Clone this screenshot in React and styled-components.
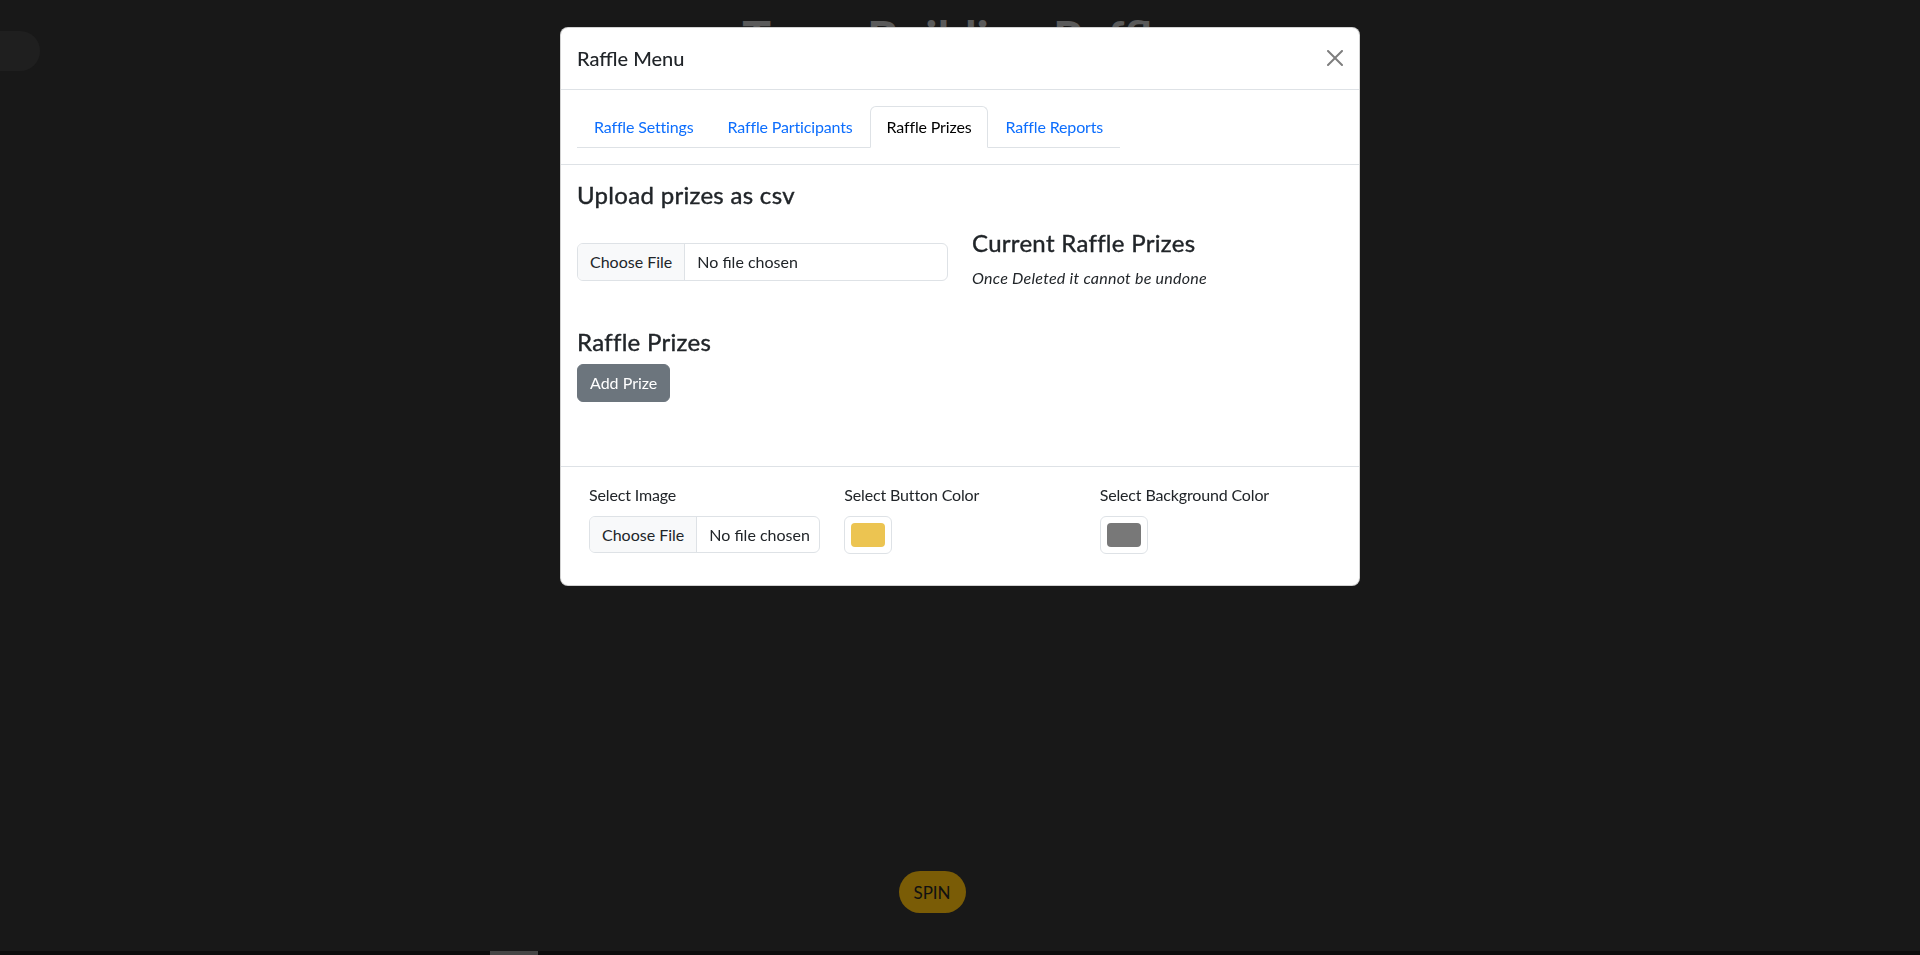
import React from "react";
import styled, { createGlobalStyle } from "styled-components";

const GlobalStyle = createGlobalStyle`
  html, body { margin: 0; padding: 0; }
  body {
    font-family: Lato, "Liberation Sans", sans-serif;
    background: #303030;
    overflow: hidden;
  }
  *, *::before, *::after { box-sizing: border-box; }
`;

/* ---------- page behind the modal ---------- */
const Page = styled.div`
  height: 100vh;
  display: flex;
  flex-direction: column;
  background: #303030;
  overflow: hidden;
`;

const TopRow = styled.div`
  display: grid;
  grid-template-columns: 40px 1fr;
  align-items: start;
`;

const SidePill = styled.div`
  width: 80px;
  height: 40px;
  margin: 31px 0 0 -40px;
  border-radius: 20px;
  background: #3e3e3e;
`;

const Hero = styled.h1`
  margin: 8px 0 0;
  padding-right: 40px;
  text-align: center;
  font-size: 48px;
  line-height: 60px;
  font-weight: 700;
  color: #b4b4b4;
`;

const SpinRow = styled.div`
  margin-top: auto;
  margin-bottom: 38px;
  display: flex;
  justify-content: center;
  padding-right: 56px;
`;

const SpinButton = styled.button`
  width: 67px;
  height: 42px;
  border: none;
  border-radius: 21px;
  background: #f4b80c;
  color: #222;
  font-family: inherit;
  font-size: 17px;
`;

const BottomBar = styled.div`
  height: 4px;
  background: #181818;
  display: flex;
`;

const Thumb = styled.div`
  width: 48px;
  margin-left: 490px;
  background: #8a8a8a;
`;

/* ---------- modal ---------- */
const Backdrop = styled.div`
  position: fixed;
  inset: 0;
  background: rgba(0, 0, 0, 0.5);
`;

const DialogLayer = styled.div`
  position: fixed;
  inset: 0;
  overflow-y: auto;
`;

const Dialog = styled.div`
  width: 800px;
  margin: 27px auto;
  background: #fff;
  border: 1px solid rgba(0, 0, 0, 0.175);
  border-radius: 8px;
  color: #212529;
`;

const Header = styled.div`
  display: flex;
  align-items: center;
  justify-content: space-between;
  padding: 15px 16px 16px;
  border-bottom: 1px solid #dee2e6;
`;

const Title = styled.h5`
  margin: 0;
  font-size: 20px;
  line-height: 30px;
  font-weight: 500;
  color: #212529;
`;

const CloseButton = styled.button`
  display: flex;
  width: 16px;
  height: 16px;
  padding: 0;
  border: 0;
  background: transparent;
  opacity: 0.5;
  cursor: pointer;
`;

const TabsBar = styled.div`
  padding: 16px;
`;

const Tabs = styled.div`
  display: inline-flex;
  border-bottom: 1px solid #dee2e6;
`;

const Tab = styled.button`
  font-family: inherit;
  font-size: 16px;
  line-height: 24px;
  letter-spacing: -0.15px;
  padding: 8px 16px;
  margin-bottom: -1px;
  background: ${(p) => (p.$active ? "#fff" : "transparent")};
  border: 1px solid transparent;
  border-color: ${(p) => (p.$active ? "#dee2e6 #dee2e6 #fff" : "transparent")};
  border-radius: 6px 6px 0 0;
  color: ${(p) => (p.$active ? "#000" : "#0d6efd")};
  cursor: pointer;
`;

const Body = styled.div`
  padding: 16px;
  border-top: 1px solid #dee2e6;
`;

const Heading = styled.h4`
  margin: 0 0 8px;
  font-size: 24px;
  line-height: 28.8px;
  font-weight: 400;
  letter-spacing: 0.3px;
  -webkit-text-stroke: 0.4px currentColor;
  color: #212529;
`;

const TwoCol = styled.div`
  display: grid;
  grid-template-columns: minmax(0, 1fr) minmax(0, 1fr);
  column-gap: 24px;
  align-items: start;
  margin-top: 19px;
`;

const LeftCol = styled.div`
  padding-top: 14px;
`;

const Note = styled.p`
  margin: 0 0 16px;
  font-size: 16px;
  line-height: 24px;
  letter-spacing: 0.25px;
  font-style: italic;
`;

const PrizesSection = styled.section`
  margin-top: 22px;
`;

const AddButton = styled.button`
  font-family: inherit;
  font-size: 16px;
  line-height: 24px;
  padding: 6px 12px;
  border: 1px solid #6c757d;
  border-radius: 6px;
  background: #6c757d;
  color: #fff;
  cursor: pointer;
`;

const PrizeList = styled.div`
  min-height: 48px;
`;

const FileField = styled.label`
  display: flex;
  width: 100%;
  height: ${(p) => p.$h}px;
  border: 1px solid #dee2e6;
  border-radius: 6px;
  overflow: hidden;
  background: #fff;
  font-size: 16px;
  color: #212529;
  cursor: pointer;
`;

const FileButton = styled.span`
  display: flex;
  align-items: center;
  flex-shrink: 0;
  padding: 0 12px;
  background: #f8f9fa;
  border-right: 1px solid #dee2e6;
  white-space: nowrap;
`;

const FileName = styled.span`
  display: flex;
  align-items: center;
  min-width: 0;
  padding: 0 12px;
  white-space: nowrap;
  overflow: hidden;
`;

const HiddenInput = styled.input`
  display: none;
`;

const Footer = styled.div`
  display: grid;
  grid-template-columns: repeat(3, minmax(0, 1fr));
  padding: 16px 16px 31px;
  border-top: 1px solid #dee2e6;
`;

const FooterField = styled.div`
  display: flex;
  flex-direction: column;
  align-items: flex-start;
  min-width: 0;
  padding: 0 12px;
`;

const FieldLabel = styled.span`
  font-size: 16px;
  line-height: 24px;
  letter-spacing: -0.15px;
  margin-bottom: 9px;
  color: #212529;
`;

const ColorWell = styled.span`
  display: block;
  width: 48px;
  height: 38px;
  padding: 6px;
  border: 1px solid #dee2e6;
  border-radius: 6px;
  background: #fff;
`;

const Swatch = styled.span`
  display: block;
  width: 100%;
  height: 100%;
  border-radius: 4px;
  background: ${(p) => p.$color};
`;

const CloseIcon = () => (
  <svg width="16" height="16" viewBox="0 0 16 16" aria-hidden="true">
    <path
      fill="#000"
      d="M.293.293a1 1 0 0 1 1.414 0L8 6.586 14.293.293a1 1 0 1 1 1.414 1.414L9.414 8l6.293 6.293a1 1 0 0 1-1.414 1.414L8 9.414l-6.293 6.293a1 1 0 0 1-1.414-1.414L6.586 8 .293 1.707a1 1 0 0 1 0-1.414z"
    />
  </svg>
);

const FileInput = ({ h }) => (
  <FileField $h={h}>
    <HiddenInput type="file" />
    <FileButton>Choose File</FileButton>
    <FileName>No file chosen</FileName>
  </FileField>
);

const tabs = ["Raffle Settings", "Raffle Participants", "Raffle Prizes", "Raffle Reports"];

export default function App() {
  return (
    <>
      <GlobalStyle />
      <Page>
        <TopRow>
          <SidePill />
          <Hero>Team Building Raffle</Hero>
        </TopRow>
        <SpinRow>
          <SpinButton>SPIN</SpinButton>
        </SpinRow>
        <BottomBar>
          <Thumb />
        </BottomBar>
      </Page>

      <Backdrop />
      <DialogLayer>
        <Dialog role="dialog">
          <Header>
            <Title>Raffle Menu</Title>
            <CloseButton aria-label="Close">
              <CloseIcon />
            </CloseButton>
          </Header>
          <TabsBar>
            <Tabs>
              {tabs.map((t) => (
                <Tab key={t} $active={t === "Raffle Prizes"}>
                  {t}
                </Tab>
              ))}
            </Tabs>
          </TabsBar>
          <Body>
            <Heading>Upload prizes as csv</Heading>
            <TwoCol>
              <LeftCol>
                <FileInput h={38} />
              </LeftCol>
              <div>
                <Heading>Current Raffle Prizes</Heading>
                <Note>Once Deleted it cannot be undone</Note>
              </div>
            </TwoCol>
            <PrizesSection>
              <Heading>Raffle Prizes</Heading>
              <AddButton>Add Prize</AddButton>
              <PrizeList />
            </PrizesSection>
          </Body>
          <Footer>
            <FooterField>
              <FieldLabel>Select Image</FieldLabel>
              <FileInput h={37} />
            </FooterField>
            <FooterField>
              <FieldLabel>Select Button Color</FieldLabel>
              <ColorWell>
                <Swatch $color="#ecc451" />
              </ColorWell>
            </FooterField>
            <FooterField>
              <FieldLabel>Select Background Color</FieldLabel>
              <ColorWell>
                <Swatch $color="#787878" />
              </ColorWell>
            </FooterField>
          </Footer>
        </Dialog>
      </DialogLayer>
    </>
  );
}
